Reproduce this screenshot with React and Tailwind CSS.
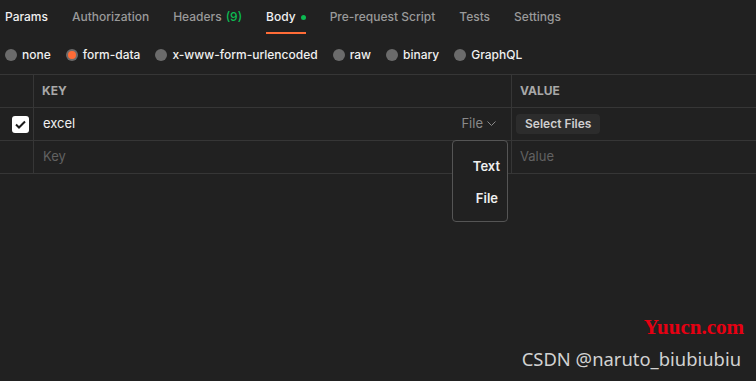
import React from "react";

const tabs = [
  { label: "Params", white: true },
  { label: "Authorization" },
  { label: "Headers", count: "(9)" },
  { label: "Body", active: true, dot: true },
  { label: "Pre-request Script" },
  { label: "Tests" },
  { label: "Settings" },
];

const bodyTypes = [
  { label: "none" },
  { label: "form-data", checked: true },
  { label: "x-www-form-urlencoded" },
  { label: "raw" },
  { label: "binary" },
  { label: "GraphQL" },
];

const Radio = ({ checked }) => (
  <span className="w-3 h-3 rounded-full bg-[#6b6b6b] flex items-center justify-center shrink-0">
    {checked && <span className="w-2 h-2 rounded-full bg-[#ff6c37]" />}
  </span>
);

export default function App() {
  return (
    <div
      className="relative w-[756px] h-[381px] bg-[#212121] overflow-hidden text-[12px]"
      style={{ fontFamily: "Inter, 'Liberation Sans', sans-serif" }}
    >
      {/* Tabs */}
      <div className="flex h-[34px] pl-[5px] gap-6">
        {tabs.map((t) => (
          <div
            key={t.label}
            className={`relative flex items-center h-full font-medium ${
              t.active || t.white ? "text-[#f0f0f0]" : "text-[#9a9a9a]"
            }`}
          >
            <span>{t.label}</span>
            {t.count && <span className="ml-1 text-[#0cbb52]">{t.count}</span>}
            {t.dot && <span className="ml-[5px] w-[5px] h-[5px] rounded-full bg-[#0cbb52]" />}
            {t.active && (
              <span className="absolute left-0 right-0 bottom-0 h-[2px] bg-[#ff6c37]" />
            )}
          </div>
        ))}
      </div>

      {/* Body type radios */}
      <div className="flex items-center h-[40px] pl-[5px] pt-[1px] gap-[15px]">
        {bodyTypes.map((b) => (
          <label key={b.label} className="flex items-center gap-[5px] text-[#f0f0f0] font-medium">
            <Radio checked={b.checked} />
            <span>{b.label}</span>
          </label>
        ))}
      </div>

      {/* Form data table */}
      <div className="border-t border-[#363636]">
        <div className="grid grid-cols-[34px_478px_1fr] h-[33px] border-b border-[#363636]">
          <div className="border-r border-[#363636]" />
          <div className="flex items-center pl-[8px] border-r border-[#363636] text-[12px] font-bold text-[#a8a8a8]">
            KEY
          </div>
          <div className="flex items-center pl-[8px] text-[12px] font-bold text-[#a8a8a8]">
            VALUE
          </div>
        </div>

        <div className="grid grid-cols-[34px_478px_1fr] h-[33px] border-b border-[#363636]">
          <div className="flex items-center justify-center pl-[7px] border-r border-[#363636]">
            <span className="w-[17px] h-[17px] rounded-[3px] bg-white flex items-center justify-center">
              <svg width="11" height="9" viewBox="0 0 11 9">
                <path d="M1 4.5 L4 7.5 L10 1.5" stroke="#1a1a1a" strokeWidth="2" fill="none" />
              </svg>
            </span>
          </div>
          <div className="flex items-center justify-between pl-[9px] pr-[15px] border-r border-[#363636] text-[13px]">
            <span className="text-[#f0f0f0]">excel</span>
            <span className="flex items-center gap-[4px] text-[#8a8a8a]">
              File
              <svg width="9" height="6" viewBox="0 0 9 6">
                <path d="M0.5 0.5 L4.5 4.5 L8.5 0.5" stroke="#8a8a8a" strokeWidth="1" fill="none" />
              </svg>
            </span>
          </div>
          <div className="flex items-center pl-[4px]">
            <button className="h-[20px] px-[9px] rounded-[4px] bg-[#2c2c2c] text-[12px] font-semibold text-[#cfcfcf]">
              Select Files
            </button>
          </div>
        </div>

        <div className="grid grid-cols-[34px_478px_1fr] h-[33px] border-b border-[#363636] text-[13px]">
          <div className="border-r border-[#363636]" />
          <div className="flex items-center pl-[9px] border-r border-[#363636] text-[#626262]">Key</div>
          <div className="flex items-center pl-[8px] text-[#626262]">Value</div>
        </div>
      </div>

      {/* Type dropdown */}
      <div className="absolute left-[452px] top-[140px] w-[56px] h-[82px] rounded-[4px] border border-[#555] bg-[#212121] flex flex-col items-end pr-[7px] pt-[17px] gap-[16px] text-[13px] text-[#f0f0f0] font-semibold">
        <span className="leading-[16px]">Text</span>
        <span className="leading-[16px] pr-[2px]">File</span>
      </div>

      {/* Watermarks */}
      <div
        className="absolute right-[12px] top-[312px] text-[21px] font-bold text-[#e60012]"
        style={{ fontFamily: "'Liberation Serif', serif" }}
      >
        Yuucn.com
      </div>
      <div
        className="absolute right-[15px] top-[345px] text-[18.4px] text-[#d2d2d2]"
        style={{ fontFamily: "'Noto Sans', 'Liberation Sans', sans-serif" }}
      >
        CSDN @naruto_biubiubiu
      </div>
    </div>
  );
}
